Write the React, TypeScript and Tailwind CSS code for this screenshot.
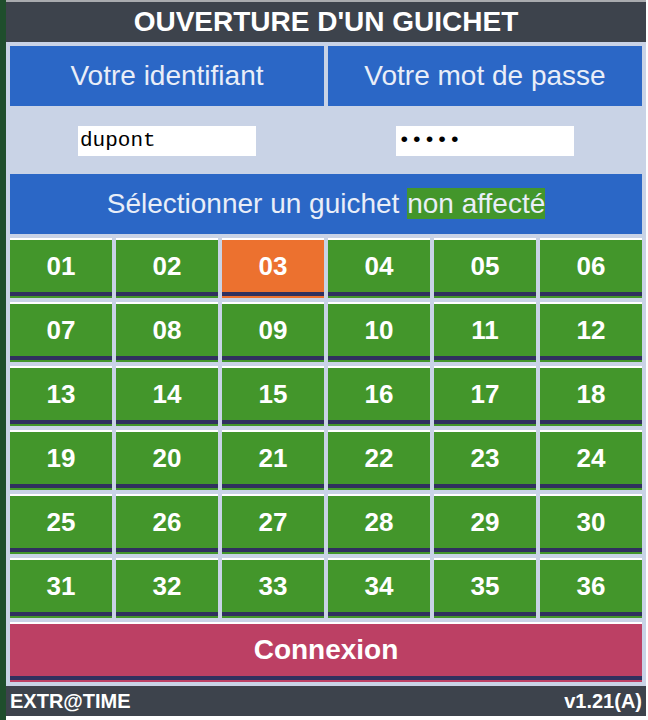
const GUICHETS = Array.from({ length: 36 }, (_, i) => String(i + 1).padStart(2, "0"));
const SELECTED = "03";

function Guichet({ num }: { num: string }) {
  const active = num === SELECTED;
  return (
    <div
      className={`border-t-2 border-white pb-[2px] ${
        active ? "bg-[#ec712f]" : "bg-[#43962b]"
      }`}
    >
      <div className="flex h-[56px] items-center justify-center border-b-4 border-[#30305e] text-[26px] font-bold text-white">
        {num}
      </div>
    </div>
  );
}

export default function App() {
  return (
    <div className="flex min-h-[720px] bg-white font-['Liberation_Sans',Arial,sans-serif]">
      <div className="w-[6px] shrink-0 bg-[#1f4e2c]" />
      <div className="flex h-[716px] w-[640px] flex-col border-t-2 border-[#a9abae] bg-[#c9d3e6]">
        <div className="flex h-[40px] items-center justify-center bg-[#3d434c] text-[28px] font-bold text-white">
          OUVERTURE D'UN GUICHET
        </div>

        <div className="flex flex-col px-[4px] pt-[4px]">
          <div className="grid grid-cols-2 gap-[4px]">
            <div className="flex h-[60px] items-center justify-center bg-[#2b67c6] text-[28px] text-[#e9eef8]">
              Votre identifiant
            </div>
            <div className="flex h-[60px] items-center justify-center bg-[#2b67c6] text-[28px] text-[#e9eef8]">
              Votre mot de passe
            </div>
          </div>

          <div className="grid h-[68px] grid-cols-2 items-center gap-[4px] pt-[2px]">
            <div className="flex justify-center">
              <input
                readOnly
                value="dupont"
                className="h-[30px] w-[178px] bg-white px-[2px] font-['Courier_New','Liberation_Mono',monospace] text-[21px] text-black outline-none"
              />
            </div>
            <div className="flex justify-center">
              <input
                readOnly
                type="password"
                value="12345"
                className="h-[30px] w-[178px] bg-white px-[2px] font-['Courier_New','Liberation_Mono',monospace] text-[21px] text-black outline-none"
              />
            </div>
          </div>

          <div className="flex h-[60px] items-center justify-center bg-[#2b67c6] text-[28px] text-[#e9eef8]">
            <span>
              Sélectionner un guichet <span className="bg-[#43962b]">non affecté</span>
            </span>
          </div>

          <div className="mt-[4px] grid grid-cols-6 gap-[4px]">
            {GUICHETS.map((n) => (
              <Guichet key={n} num={n} />
            ))}
          </div>

          <div className="mt-[4px] border-t-2 border-white bg-[#bc4064] pb-[2px]">
            <div className="flex h-[56px] items-center justify-center border-b-4 border-[#30305e] text-[28px] font-bold text-white">
              Connexion
            </div>
          </div>
        </div>

        <div className="mt-[4px] flex h-[30px] items-center justify-between bg-[#3d434c] px-[4px] text-[20px] font-bold text-white">
          <span>EXTR@TIME</span>
          <span>v1.21(A)</span>
        </div>
      </div>
    </div>
  );
}
